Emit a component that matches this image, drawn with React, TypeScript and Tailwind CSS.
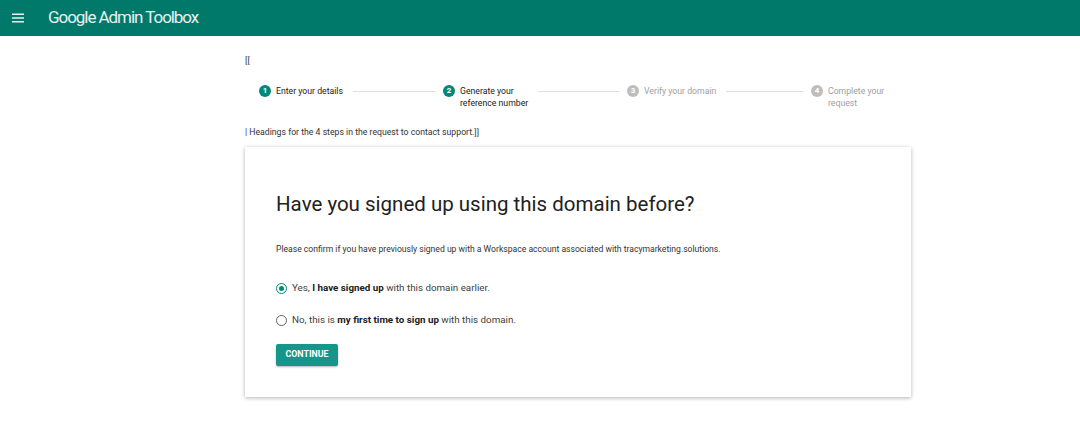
import React from "react";

const steps = [
  { n: 1, label: ["Enter your details"], active: true },
  { n: 2, label: ["Generate your", "reference number"], active: true },
  { n: 3, label: ["Verify your domain"], active: false },
  { n: 4, label: ["Complete your", "request"], active: false },
];

function Radio({ checked }: { checked: boolean }) {
  return (
    <span
      className={
        "flex h-[11px] w-[11px] shrink-0 items-center justify-center rounded-full border " +
        (checked ? "border-[#00897b]" : "border-[#616161]")
      }
    >
      {checked && <span className="h-[5px] w-[5px] rounded-full bg-[#00897b]" />}
    </span>
  );
}

export default function App() {
  return (
    <div className="min-h-screen bg-white font-['Roboto','Liberation_Sans',sans-serif]">
      {/* Top bar */}
      <header className="flex h-9 items-center bg-[#00796b]">
        <svg className="ml-3 h-3 w-3 text-white/90" viewBox="0 0 12 12" fill="currentColor">
          <rect x="0" y="1.5" width="12" height="1.5" />
          <rect x="0" y="5.25" width="12" height="1.5" />
          <rect x="0" y="9" width="12" height="1.5" />
        </svg>
        <span className="ml-6 text-[17px] tracking-[-1.05px] text-white/90">
          Google Admin Toolbox
        </span>
      </header>

      <main className="ml-[245px] w-[666px] pt-[17px]">
        <p className="text-[9px] leading-[14px] text-[#333]">[[</p>

        {/* Steps */}
        <div className="mt-[18px] ml-[14px] grid grid-cols-[184px_184px_184px_184px]">
          {steps.map((s, i) => (
            <div key={s.n} className="flex items-start">
              <span
                className={
                  "flex h-[12px] w-[12px] shrink-0 items-center justify-center rounded-full text-[8px] font-bold text-white " +
                  (s.active ? "bg-[#00897b]" : "bg-[#bdbdbd]")
                }
              >
                {s.n}
              </span>
              <div
                className={
                  "ml-[5px] text-[8.7px] leading-[12px] " +
                  (s.active ? "text-[#212121]" : "text-[#9e9e9e]")
                }
              >
                {s.label.map((l) => (
                  <div key={l}>{l}</div>
                ))}
              </div>
              {i < 3 && <div className="mt-[6px] ml-[10px] mr-[8px] h-px flex-1 bg-[#e0e0e0]" />}
            </div>
          ))}
        </div>

        <p className="mt-[16px] text-[8.7px] leading-[14px] text-[#333]">
          | Headings for the 4 steps in the request to contact support.]]
        </p>

        {/* Card */}
        <section className="mt-[8px] h-[250px] bg-white pl-[31px] pt-[43px] shadow-[0_1px_4px_rgba(0,0,0,0.3)]">
          <h1 className="text-[20.5px] leading-[28px] text-[#212121]">
            Have you signed up using this domain before?
          </h1>
          <p className="mt-[24px] text-[8.6px] leading-[14px] text-[#333]">
            Please confirm if you have previously signed up with a Workspace account associated with tracymarketing.solutions.
          </p>

          <label className="mt-[25px] flex items-center gap-[5px] text-[9.8px] leading-[14px] text-[#424242]">
            <Radio checked />
            <span>
              Yes, <b className="text-[#212121]">I have signed up</b> with this domain earlier.
            </span>
          </label>
          <label className="mt-[18px] flex items-center gap-[5px] text-[9.8px] leading-[14px] text-[#424242]">
            <Radio checked={false} />
            <span>
              No, this is <b className="text-[#212121]">my first time to sign up</b> with this domain.
            </span>
          </label>

          <button className="mt-[17px] h-[22px] w-[62px] rounded-[2px] bg-[#15968a] text-[8.8px] font-bold text-white shadow-[0_1px_2px_rgba(0,0,0,0.3)]">
            CONTINUE
          </button>
        </section>
      </main>
    </div>
  );
}
